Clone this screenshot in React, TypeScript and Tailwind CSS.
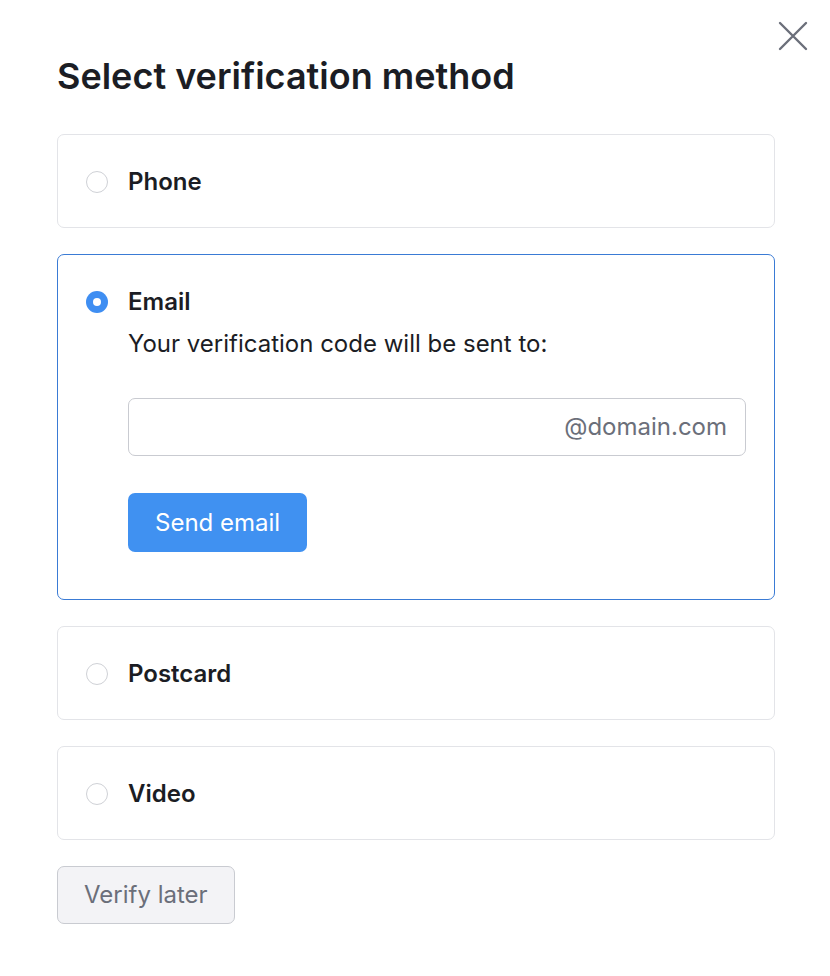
import { useState } from 'react';

type Method = 'phone' | 'email' | 'postcard' | 'video';

const methods: Array<{ id: Method; label: string }> = [
  { id: 'phone', label: 'Phone' },
  { id: 'email', label: 'Email' },
  { id: 'postcard', label: 'Postcard' },
  { id: 'video', label: 'Video' },
];

function Radio({ checked }: { checked: boolean }) {
  return checked ? (
    <span className="flex h-[22px] w-[22px] shrink-0 items-center justify-center rounded-full bg-[#3f8ef2]">
      <span className="h-[8px] w-[8px] rounded-full bg-white" />
    </span>
  ) : (
    <span className="h-[22px] w-[22px] shrink-0 rounded-full border-[1.5px] border-[#cfd1d6] bg-white" />
  );
}

export default function App() {
  const [selected, setSelected] = useState<Method>('email');

  return (
    <div
      className="relative min-h-[976px] w-[830px] bg-white text-[#1b1d24]"
      style={{ fontFamily: 'Inter, "Noto Sans", sans-serif' }}
    >
      <button className="absolute right-[22px] top-[21px] flex h-[30px] w-[30px] items-center justify-center text-[#6b6f7a]">
        <svg width="30" height="30" viewBox="0 0 30 30" fill="none" stroke="currentColor" strokeWidth="2.4" strokeLinecap="round">
          <path d="M2 2 L28 28 M28 2 L2 28" />
        </svg>
      </button>

      <div className="flex flex-col pl-[57px] pr-[55px] pt-[55px]">
        <h1 className="text-[36px] font-semibold leading-[42px]">Select verification method</h1>

        <div className="mt-[37px] flex flex-col gap-[26px]">
          {methods.map((m) => {
            const isOn = m.id === selected;
            return (
              <div
                key={m.id}
                onClick={() => setSelected(m.id)}
                className={
                  isOn
                    ? 'rounded-[7px] border border-[#3a7bd5] px-[28px] pb-[47px] pt-[32px]'
                    : 'rounded-[7px] border border-[#e3e4e8] px-[28px] pb-[30px] pt-[32px]'
                }
              >
                <div className="flex items-center gap-[20px]">
                  <Radio checked={isOn} />
                  <span className="text-[24px] font-semibold leading-[30px]">{m.label}</span>
                </div>
                {isOn && m.id === 'email' && (
                  <div className="flex flex-col pl-[42px]">
                    <p className="mt-[11px] text-[24px] leading-[32px]">Your verification code will be sent to:</p>
                    <div className="mt-[38px] flex h-[58px] items-center rounded-[7px] border border-[#c9cbd1] pr-[18px]">
                      <input className="h-full min-w-0 flex-1 bg-transparent px-[18px] text-[24px] outline-none" />
                      <span className="text-[24px] text-[#6b6f7a]">@domain.com</span>
                    </div>
                    <div className="mt-[37px]">
                      <button className="h-[59px] rounded-[7px] bg-[#4091f1] px-[27px] text-[24px] text-white">
                        Send email
                      </button>
                    </div>
                  </div>
                )}
              </div>
            );
          })}
        </div>

        <div className="mt-[26px]">
          <button className="h-[58px] rounded-[7px] border border-[#c9cbd1] bg-[#f3f3f6] px-[26px] text-[24px] text-[#6b6f7a]">
            Verify later
          </button>
        </div>
      </div>
    </div>
  );
}
